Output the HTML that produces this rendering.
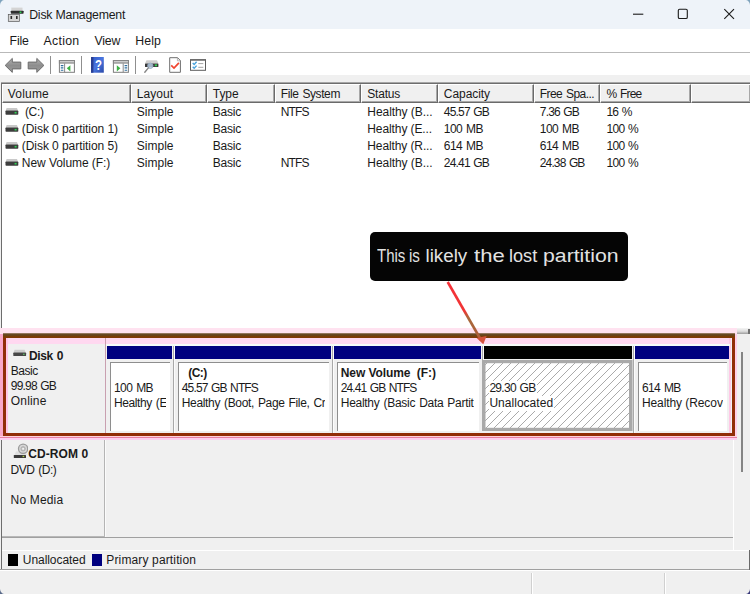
<!DOCTYPE html>
<html><head><meta charset="utf-8"><title>Disk Management</title>
<style>
html,body{margin:0;padding:0;}
body{width:750px;height:594px;overflow:hidden;background:#f0f0f0;position:relative;font-family:"Liberation Sans",sans-serif;font-size:12px;color:#1a1a1a;}
.abs{position:absolute;}
.t{position:absolute;white-space:nowrap;line-height:14px;}
.b{font-weight:bold;}
#title{left:0;top:0;width:750px;height:29px;background:#eef3f9;}
#menu{left:0;top:29px;width:750px;height:23px;background:#fff;}
#tool{left:0;top:52px;width:750px;height:23px;background:#fff;border-top:1px solid #b9b9b9;box-sizing:border-box;}
#list{left:1px;top:83px;width:749px;height:245px;background:#fff;border-top:1px solid #6d6d6d;border-left:1px solid #6d6d6d;box-sizing:border-box;}
.hd{position:absolute;top:84px;height:19px;background:#f0f0f0;border-right:1px solid #6a6a6a;border-bottom:1px solid #6a6a6a;border-left:1px solid #fff;border-top:1px solid #fff;box-sizing:border-box;box-shadow:inset -1px -1px 0 #a8a8a8;}
.bar{position:absolute;top:346px;height:13px;background:#00007f;}
.box{position:absolute;top:362px;height:69px;background:#fff;border-top:1px solid #8e8e8e;border-left:1px solid #8e8e8e;box-sizing:border-box;}
.sep{position:absolute;top:56px;width:1px;height:18px;background:#8f8f8f;}
.vi{position:absolute;left:6px;width:13px;height:7px;}
</style></head><body>
<div id="title" class="abs"></div>
<div id="menu" class="abs"></div>
<div id="tool" class="abs"></div>
<div class="sep" style="left:50px"></div>
<div class="sep" style="left:81px"></div>
<div class="sep" style="left:135px"></div>

<!-- title icon -->
<svg class="abs" style="left:7px;top:6px" width="18" height="17" viewBox="7 6 18 17">
<rect x="11.3" y="7.6" width="11.2" height="3.4" fill="#d4d4d4"/>
<rect x="10.8" y="10.7" width="12.8" height="3" rx="0.6" fill="#2e2e2e"/>
<rect x="19.6" y="11.5" width="1.8" height="1.6" fill="#2fd254"/>
<rect x="8.3" y="14.4" width="11.2" height="7" fill="#d6d6d6" stroke="#5a5a5a" stroke-width="0.7"/>
<rect x="10.5" y="16" width="1.6" height="3" fill="#2a2a2a"/>
<rect x="16" y="16" width="1.6" height="3" fill="#2a2a2a"/>
</svg>
<svg class="abs" style="left:0;top:0" width="6" height="6" viewBox="0 0 6 6"><path d="M0 0H4Q0.5 0.8 0 5Z" fill="#7fa3bd"/></svg>
<svg class="abs" style="left:744px;top:0" width="6" height="6" viewBox="0 0 6 6"><path d="M6 0H2Q5.5 0.8 6 5Z" fill="#7fa3bd"/></svg>
<!-- window buttons -->
<svg class="abs" style="left:625px;top:4px" width="120" height="20" viewBox="625 4 120 20" fill="none" stroke="#1a1a1a" stroke-width="1.1">
<path d="M633 14.2H643.3"/>
<rect x="678.3" y="9.3" width="9" height="9.2" rx="1.3"/>
<path d="M724.3 9.2L734 18.8M734 9.2L724.3 18.8"/>
</svg>
<!-- toolbar icons -->
<svg class="abs" style="left:0;top:53px" width="215" height="22" viewBox="0 53 215 22">
<defs>
<linearGradient id="ga" x1="0" y1="0" x2="0" y2="1"><stop offset="0" stop-color="#b4b4b4"/><stop offset="0.5" stop-color="#8e8e8e"/><stop offset="1" stop-color="#9c9c9c"/></linearGradient>
<linearGradient id="gh" x1="0" y1="0" x2="1" y2="1"><stop offset="0" stop-color="#2f56c4"/><stop offset="0.5" stop-color="#4a76e0"/><stop offset="1" stop-color="#2a49a8"/></linearGradient>
</defs>
<path d="M5.2 65.4L12.3 58.4V62.1H20.8V68.9H12.3V72.4Z" fill="url(#ga)" stroke="#6c6c6c" stroke-width="1" stroke-linejoin="round"/>
<path d="M43.9 65.4L36.8 58.4V62.1H28.2V68.9H36.8V72.4Z" fill="url(#ga)" stroke="#6c6c6c" stroke-width="1" stroke-linejoin="round"/>
<!-- window left arrow -->
<g>
<rect x="59.4" y="60.5" width="15" height="11.8" fill="#fff" stroke="#7d7d7d" stroke-width="1"/>
<rect x="58.9" y="60" width="16" height="3.6" fill="#868686"/>
<path d="M60 61.8H74" stroke="#e4e4e4" stroke-width="1.1"/>
<path d="M64.6 63.5V72.3" stroke="#7d7d7d" stroke-width="0.9"/>
<path d="M60.8 65.6H63.4M60.8 67.9H63.4M60.8 70.2H63.4" stroke="#2f6f9f" stroke-width="1.1"/>
<path d="M70.4 65.2V71.4L66.8 68.3Z" fill="#3cb043"/>
</g>
<!-- help -->
<rect x="91" y="57" width="12.8" height="15.7" fill="url(#gh)"/>
<rect x="91" y="57" width="2.4" height="15.7" fill="#2a3f92"/>
<text transform="translate(98.4 70.4) scale(0.74 1)" x="0" y="0" font-family="Liberation Sans, sans-serif" font-weight="bold" font-size="15.4" fill="#fff" text-anchor="middle">?</text>
<!-- window right arrow -->
<g>
<rect x="113.4" y="60.5" width="15" height="11.8" fill="#fff" stroke="#7d7d7d" stroke-width="1"/>
<rect x="112.9" y="60" width="16" height="3.6" fill="#868686"/>
<path d="M114 61.8H128" stroke="#e4e4e4" stroke-width="1.1"/>
<path d="M123.2 63.5V72.3" stroke="#7d7d7d" stroke-width="0.9"/>
<path d="M124.6 65.6H127.2M124.6 67.9H127.2M124.6 70.2H127.2" stroke="#2f6f9f" stroke-width="1.1"/>
<path d="M116.8 65.2V71.4L120.4 68.3Z" fill="#3cb043"/>
</g>
<!-- drive + magnifier -->
<g>
<path d="M146.5 60.3H157L158.4 63.6H145Z" fill="#cfcfcf"/>
<rect x="145" y="63.5" width="13.4" height="3.6" rx="0.6" fill="#3a3a3a"/>
<rect x="154.8" y="64.4" width="2.2" height="1.8" fill="#2fd254"/>
<circle cx="150.3" cy="65.8" r="2.7" fill="#b7cbe0" fill-opacity="0.85" stroke="#8ea6c0" stroke-width="0.8"/>
<path d="M148.4 67.9L144.8 72.2" stroke="#868686" stroke-width="1.4" stroke-linecap="round"/>
</g>
<!-- page check -->
<path d="M169.7 57.7H177.6L180.4 60.6V72.3H169.7Z" fill="#fff" stroke="#6e6e6e" stroke-width="1"/>
<path d="M177.4 57.8V60.8H180.3" fill="none" stroke="#9a9a9a" stroke-width="0.7"/>
<path d="M171.2 65.4L174 68.1L178.9 62.8" fill="none" stroke="#f0452f" stroke-width="1.7"/>
<!-- checklist -->
<rect x="190.5" y="59.8" width="15" height="10.5" fill="#fff" stroke="#5c5c5c" stroke-width="1"/>
<rect x="190" y="59.2" width="16" height="1.4" fill="#666"/>
<path d="M192.7 62.9L194.2 64.4L196.6 61.8M192.7 66.7L194.2 68.2L196.6 65.6" fill="none" stroke="#4aa3dc" stroke-width="1.4"/>
<path d="M198.3 63.6H203.3M198.3 67.3H203.3" stroke="#9a9a9a" stroke-width="0.9"/>
</svg>
<div class="abs" style="left:1px;top:82px;width:749px;height:1px;background:#a6a6a6"></div>
<div id="list" class="abs"></div>
<div class="hd" style="left:2px;width:129px"></div>
<div class="hd" style="left:131px;width:76px"></div>
<div class="hd" style="left:207px;width:68px"></div>
<div class="hd" style="left:275px;width:86px"></div>
<div class="hd" style="left:361px;width:77px"></div>
<div class="hd" style="left:438px;width:96px"></div>
<div class="hd" style="left:534px;width:66px"></div>
<div class="hd" style="left:600px;width:91px"></div>
<div class="hd" style="left:691px;width:60px"></div>


<svg class="abs" style="left:5px;top:108px" width="14" height="8" viewBox="0 0 14 8"><path d="M1.6 0H12L13 2.8H0.6Z" fill="#c9c9c9"/><rect x="0.5" y="2.6" width="12.8" height="4.2" rx="0.7" fill="#3d3d3d"/><rect x="9.6" y="3.9" width="2" height="1.6" fill="#2fd254"/></svg>
<svg class="abs" style="left:5px;top:125px" width="14" height="8" viewBox="0 0 14 8"><path d="M1.6 0H12L13 2.8H0.6Z" fill="#c9c9c9"/><rect x="0.5" y="2.6" width="12.8" height="4.2" rx="0.7" fill="#3d3d3d"/><rect x="9.6" y="3.9" width="2" height="1.6" fill="#2fd254"/></svg>
<svg class="abs" style="left:5px;top:142px" width="14" height="8" viewBox="0 0 14 8"><path d="M1.6 0H12L13 2.8H0.6Z" fill="#c9c9c9"/><rect x="0.5" y="2.6" width="12.8" height="4.2" rx="0.7" fill="#3d3d3d"/><rect x="9.6" y="3.9" width="2" height="1.6" fill="#2fd254"/></svg>
<svg class="abs" style="left:5px;top:159px" width="14" height="8" viewBox="0 0 14 8"><path d="M1.6 0H12L13 2.8H0.6Z" fill="#c9c9c9"/><rect x="0.5" y="2.6" width="12.8" height="4.2" rx="0.7" fill="#3d3d3d"/><rect x="9.6" y="3.9" width="2" height="1.6" fill="#2fd254"/></svg>
<!-- disk area -->
<div class="abs" style="left:1px;top:328px;width:1px;height:242px;background:#6d6d6d"></div>
<div class="abs" style="left:0;top:328px;width:737px;height:6px;background:#ffe2f0"></div>
<div class="abs" style="left:0;top:334px;width:3px;height:105px;background:#f9a8c8"></div>
<div class="abs" style="left:735px;top:334px;width:2px;height:105px;background:#ffd0e8"></div>
<div class="abs" style="left:737px;top:328px;width:13px;height:6px;background:linear-gradient(#f4f4f4,#dcdcdc 55%,#9c9c9c)"></div>
<div class="abs" style="left:748px;top:329px;width:2px;height:5px;background:#707070"></div>
<div class="abs" style="left:0;top:436px;width:737px;height:4px;background:#fdcff0"></div>
<div class="abs" style="left:0;top:436px;width:737px;height:1px;background:#ffd2dc"></div>
<div class="abs" style="left:0;top:437px;width:737px;height:1px;background:#e97fa3"></div>
<div class="abs" style="left:6px;top:338px;width:725px;height:5.5px;background:#ffd8f0"></div>
<div class="abs" style="left:6px;top:338px;width:1.5px;height:95px;background:#ffc8e6"></div>
<div class="abs" style="left:729px;top:338px;width:2px;height:95px;background:#ffc8e6"></div>
<div class="abs" style="left:3px;top:334px;width:732px;height:102px;border:3px solid #912d06;border-top:4px solid #84400a;box-sizing:border-box;"></div>
<div class="abs" style="left:3px;top:333px;width:732px;height:5px;background:linear-gradient(#b59a8c 0,#6a4a24 22%,#63451c 45%,#7b3c07 65%,#7f3a04 100%)"></div>
<div class="abs" style="left:172.6px;top:345px;width:1.2px;height:88px;background:#a9a9a9"></div><div class="abs" style="left:173.8px;top:345px;width:1px;height:88px;background:#fcfcfc"></div>
<div class="abs" style="left:331.6px;top:345px;width:1.2px;height:88px;background:#a9a9a9"></div><div class="abs" style="left:332.8px;top:345px;width:1px;height:88px;background:#fcfcfc"></div>
<div class="abs" style="left:632.8px;top:345px;width:1.2px;height:88px;background:#a9a9a9"></div><div class="abs" style="left:634.0px;top:345px;width:1px;height:88px;background:#fcfcfc"></div>
<div class="abs" style="left:481.5px;top:345px;width:1.2px;height:15px;background:#a9a9a9"></div><div class="abs" style="left:482.7px;top:345px;width:1px;height:15px;background:#fcfcfc"></div>
<div class="abs" style="left:106px;top:344px;width:624px;height:2px;background:#f6fbf8"></div>
<div class="bar" style="left:107px;width:65px"></div>
<div class="bar" style="left:175px;width:156px"></div>
<div class="bar" style="left:334px;width:147px"></div>
<div class="bar" style="left:484px;width:148px;background:#000"></div>
<div class="bar" style="left:635px;width:94px"></div>
<div class="box" style="left:110px;width:60px"></div>
<div class="box" style="left:178px;width:151px"></div>
<div class="box" style="left:337px;width:142px"></div>
<div class="box" style="left:638px;width:89px"></div>

<!-- disk label -->
<div class="abs" style="left:105px;top:338px;width:1px;height:95px;background:#c9a0b0"></div>
<svg class="abs" style="left:13px;top:349px" width="14" height="8" viewBox="0 0 14 8"><path d="M1.6 0.7H11.6L12.8 3.8H0.4Z" fill="#cdcdcd"/><rect x="0.3" y="3.6" width="12.8" height="3.5" rx="0.7" fill="#474747"/><rect x="10" y="4.7" width="1.6" height="1.2" fill="#5bbf62"/></svg>

<svg class="abs" style="left:482px;top:360px" width="151" height="71" viewBox="0 0 151 71"><defs><pattern id="hp" width="8" height="8" patternUnits="userSpaceOnUse"><rect width="8" height="8" fill="#fff"/><path d="M-1 9L9 -1M-1 1L1 -1M7 9L9 7" stroke="#8e8e8e" stroke-width="0.75"/></pattern></defs><rect x="0" y="0" width="150.5" height="71" fill="#a9a9a9"/><rect x="3.5" y="3.2" width="143.5" height="64.6" fill="url(#hp)"/></svg>

<!-- cdrom -->
<div class="abs" style="left:104px;top:440px;width:1px;height:97px;background:#b4b4b4"></div><div class="abs" style="left:105px;top:440px;width:1px;height:97px;background:#fbfbfb"></div>
<div class="abs" style="left:2px;top:536px;width:103px;height:1px;background:#b8b8b8"></div>

<svg class="abs" style="left:12px;top:442px" width="16" height="17" viewBox="12 442 16 17">
<path d="M14.5 455L16 451.5H26L26.5 455Z" fill="#dedede"/>
<circle cx="23.1" cy="448.8" r="4.6" fill="#d8d8d8" stroke="#9c9c9c" stroke-width="1.3"/>
<circle cx="23.1" cy="448.8" r="2.2" fill="#c4c4c4" stroke="#a8a8a8" stroke-width="0.8"/>
<circle cx="23.1" cy="448.8" r="0.9" fill="#fff"/>
<rect x="13.8" y="455" width="12.2" height="2.9" rx="0.5" fill="#3a3a3a"/>
<rect x="22.6" y="455.8" width="1.6" height="1.3" fill="#b5d44a"/>
</svg>
<svg class="abs" style="left:0;top:588px" width="6" height="6" viewBox="0 0 6 6"><path d="M0 6H4Q0.5 5.2 0 1Z" fill="#5a6a8a"/></svg>
<svg class="abs" style="left:744px;top:588px" width="6" height="6" viewBox="0 0 6 6"><path d="M6 6H2Q5.5 5.2 6 1Z" fill="#3a3a7a"/></svg>
<!-- bottom -->
<div class="abs" style="left:2px;top:537px;width:731px;height:1px;background:#a0a0a0"></div>
<div class="abs" style="left:733px;top:440px;width:1px;height:110px;background:#fff"></div>
<div class="abs" style="left:2px;top:550px;width:747px;height:1px;background:#fff"></div>
<div class="abs" style="left:741px;top:352px;width:2px;height:120px;background:#858585"></div>
<div class="abs" style="left:8px;top:554px;width:10px;height:12px;background:#000"></div>
<div class="abs" style="left:92px;top:554px;width:10px;height:12px;background:#00007f"></div>
<div class="abs" style="left:0px;top:569px;width:750px;height:1px;background:#a0a0a0"></div>
<div class="abs" style="left:0px;top:570px;width:750px;height:1px;background:#fff"></div>
<div class="abs" style="left:749px;top:550px;width:1px;height:20px;background:#696969"></div>
<div class="abs" style="left:531px;top:573px;width:1px;height:21px;background:#d0d0d0"></div>
<div class="abs" style="left:532px;top:573px;width:1px;height:21px;background:#fff"></div>
<div class="abs" style="left:664px;top:573px;width:1px;height:21px;background:#d0d0d0"></div>
<div class="abs" style="left:665px;top:573px;width:1px;height:21px;background:#fff"></div>

<!-- callout -->
<div class="abs" style="left:369.5px;top:231.5px;width:258.5px;height:49.5px;background:#050505;border-radius:5px"></div>
<svg class="abs" style="left:430px;top:275px" width="80" height="75" viewBox="430 275 80 75"><defs><linearGradient id="ag" gradientUnits="userSpaceOnUse" x1="0" y1="282" x2="0" y2="340"><stop offset="0" stop-color="#f53038"/><stop offset="0.5" stop-color="#f03535"/><stop offset="0.62" stop-color="#a86a3c"/><stop offset="1" stop-color="#b05a38"/></linearGradient></defs><line x1="447.7" y1="282" x2="481" y2="340" stroke="url(#ag)" stroke-width="2.6"/><path d="M483.3 344.3 L476.6 338 L486.6 336 Z" fill="#d4523c"/></svg>
<div class="t" style="left:29.2px;top:8px;letter-spacing:-0.21px;font-size:12.3px;color:#1b1b1b;">Disk Management</div>
<div class="t" style="left:9.5px;top:34px;letter-spacing:-0.12px;font-size:12.3px;">File</div>
<div class="t" style="left:43.5px;top:34px;letter-spacing:0.29px;font-size:12.3px;">Action</div>
<div class="t" style="left:94.5px;top:34px;letter-spacing:-0.18px;font-size:12.3px;">View</div>
<div class="t" style="left:135.3px;top:34px;letter-spacing:0.11px;font-size:12.3px;">Help</div>
<div class="t" style="left:7.8px;top:87px;letter-spacing:0.19px;">Volume</div>
<div class="t" style="left:136.8px;top:87px;letter-spacing:0.03px;">Layout</div>
<div class="t" style="left:212.8px;top:87px;letter-spacing:-0.08px;">Type</div>
<div class="t" style="left:280.8px;top:87px;letter-spacing:-0.41px;word-spacing:1.0px;">File System</div>
<div class="t" style="left:367.3px;top:87px;letter-spacing:-0.22px;">Status</div>
<div class="t" style="left:443.8px;top:87px;letter-spacing:-0.06px;">Capacity</div>
<div class="t" style="left:539.8px;top:87px;letter-spacing:-0.56px;word-spacing:1.0px;">Free Spa...</div>
<div class="t" style="left:606.5px;top:87px;letter-spacing:-0.78px;word-spacing:1.0px;">% Free</div>
<div class="t" style="left:24.9px;top:105px;letter-spacing:-0.28px;">(C:)</div>
<div class="t" style="left:21.8px;top:122px;letter-spacing:-0.06px;">(Disk 0 partition 1)</div>
<div class="t" style="left:21.8px;top:139px;letter-spacing:-0.06px;">(Disk 0 partition 5)</div>
<div class="t" style="left:21.8px;top:156px;letter-spacing:-0.06px;">New Volume (F:)</div>
<div class="t" style="left:136.8px;top:105px;">Simple</div>
<div class="t" style="left:212.8px;top:105px;letter-spacing:-0.23px;">Basic</div>
<div class="t" style="left:136.8px;top:122px;">Simple</div>
<div class="t" style="left:212.8px;top:122px;letter-spacing:-0.23px;">Basic</div>
<div class="t" style="left:136.8px;top:139px;">Simple</div>
<div class="t" style="left:212.8px;top:139px;letter-spacing:-0.23px;">Basic</div>
<div class="t" style="left:136.8px;top:156px;">Simple</div>
<div class="t" style="left:212.8px;top:156px;letter-spacing:-0.23px;">Basic</div>
<div class="t" style="left:280.8px;top:105px;letter-spacing:-0.91px;">NTFS</div>
<div class="t" style="left:280.8px;top:156px;letter-spacing:-0.91px;">NTFS</div>
<div class="t" style="left:367.3px;top:105px;letter-spacing:-0.06px;">Healthy (B...</div>
<div class="t" style="left:367.3px;top:122px;letter-spacing:-0.10px;">Healthy (E...</div>
<div class="t" style="left:367.3px;top:139px;letter-spacing:-0.11px;">Healthy (R...</div>
<div class="t" style="left:367.3px;top:156px;letter-spacing:-0.06px;">Healthy (B...</div>
<div class="t" style="left:443.8px;top:105px;letter-spacing:-0.81px;word-spacing:1.0px;">45.57 GB</div>
<div class="t" style="left:443.8px;top:122px;letter-spacing:-0.53px;word-spacing:1.0px;">100 MB</div>
<div class="t" style="left:443.8px;top:139px;letter-spacing:-0.53px;word-spacing:1.0px;">614 MB</div>
<div class="t" style="left:443.8px;top:156px;letter-spacing:-0.81px;word-spacing:1.0px;">24.41 GB</div>
<div class="t" style="left:539.8px;top:105px;letter-spacing:-0.83px;word-spacing:1.0px;">7.36 GB</div>
<div class="t" style="left:539.8px;top:122px;letter-spacing:-0.53px;word-spacing:1.0px;">100 MB</div>
<div class="t" style="left:539.8px;top:139px;letter-spacing:-0.53px;word-spacing:1.0px;">614 MB</div>
<div class="t" style="left:539.8px;top:156px;letter-spacing:-0.88px;word-spacing:1.0px;">24.38 GB</div>
<div class="t" style="left:606.5px;top:105px;letter-spacing:-0.84px;word-spacing:1.0px;">16 %</div>
<div class="t" style="left:606.5px;top:122px;letter-spacing:-0.71px;word-spacing:1.0px;">100 %</div>
<div class="t" style="left:606.5px;top:139px;letter-spacing:-0.71px;word-spacing:1.0px;">100 %</div>
<div class="t" style="left:606.5px;top:156px;letter-spacing:-0.71px;word-spacing:1.0px;">100 %</div>
<div class="t b" style="left:29.0px;top:349px;letter-spacing:-0.38px;word-spacing:1.0px;">Disk 0</div>
<div class="t" style="left:10.8px;top:364px;letter-spacing:-0.45px;">Basic</div>
<div class="t" style="left:10.8px;top:379px;letter-spacing:-0.81px;word-spacing:1.0px;">99.98 GB</div>
<div class="t" style="left:10.8px;top:394px;letter-spacing:0.17px;">Online</div>
<div class="t" style="left:113.9px;top:381px;letter-spacing:-0.53px;word-spacing:1.0px;">100 MB</div>
<div class="abs" style="left:113.9px;top:396px;width:52.6px;height:16px;overflow:hidden"><div class="t" style="left:0;top:0;letter-spacing:-0.39px;word-spacing:1.0px;">Healthy (EFI System Partition)</div></div>
<div class="t b" style="left:188.3px;top:366px;letter-spacing:-0.61px;">(C:)</div>
<div class="t" style="left:181.8px;top:381px;letter-spacing:-0.86px;word-spacing:1.0px;">45.57 GB NTFS</div>
<div class="abs" style="left:181.8px;top:396px;width:143.7px;height:16px;overflow:hidden"><div class="t" style="left:0;top:0;letter-spacing:-0.35px;word-spacing:1.0px;">Healthy (Boot, Page File, Crash Dump, Basic Data Partition)</div></div>
<div class="t b" style="left:340.8px;top:366px;letter-spacing:-0.09px;">New Volume&nbsp; (F:)</div>
<div class="t" style="left:340.8px;top:381px;letter-spacing:-0.90px;word-spacing:1.0px;">24.41 GB NTFS</div>
<div class="abs" style="left:340.8px;top:396px;width:132.9px;height:16px;overflow:hidden"><div class="t" style="left:0;top:0;letter-spacing:-0.29px;word-spacing:1.0px;">Healthy (Basic Data Partition)</div></div>
<div class="t" style="left:489.4px;top:381px;letter-spacing:-0.70px;word-spacing:1.0px;background:#fff;line-height:15px;padding-right:1px;">29.30 GB</div>
<div class="t" style="left:489.4px;top:396px;letter-spacing:0.03px;background:#fff;line-height:15px;padding-right:1px;">Unallocated</div>
<div class="t" style="left:641.9px;top:381px;letter-spacing:-0.59px;word-spacing:1.0px;">614 MB</div>
<div class="abs" style="left:641.9px;top:396px;width:80.7px;height:16px;overflow:hidden"><div class="t" style="left:0;top:0;letter-spacing:-0.08px;">Healthy (Recovery Partition)</div></div>
<div class="t b" style="left:28.3px;top:447px;letter-spacing:0.08px;">CD-ROM 0</div>
<div class="t" style="left:10.6px;top:463px;letter-spacing:-0.50px;word-spacing:1.0px;">DVD (D:)</div>
<div class="t" style="left:10.6px;top:493px;letter-spacing:0.16px;">No Media</div>
<div class="t" style="left:22.8px;top:553px;letter-spacing:-0.06px;">Unallocated</div>
<div class="t" style="left:106.3px;top:553px;letter-spacing:0.14px;">Primary partition</div>
<div class="t" style="left:0;top:243.5px;width:750px;height:24px;font-size:18.8px;line-height:24px;color:#e2e2e2"><span style="position:absolute;left:377.10px;top:0;transform:scaleX(0.800);transform-origin:0 0">This</span> <span style="position:absolute;left:409.49px;top:0;transform:scaleX(0.808);transform-origin:0 0">is</span> <span style="position:absolute;left:425.50px;top:0;transform:scaleX(1.000);transform-origin:0 0">likely</span> <span style="position:absolute;left:473.80px;top:0;transform:scaleX(1.176);transform-origin:0 0">the</span> <span style="position:absolute;left:508.64px;top:0;transform:scaleX(0.964);transform-origin:0 0">lost</span> <span style="position:absolute;left:543.37px;top:0;transform:scaleX(1.131);transform-origin:0 0">partition</span></div>
</body></html>
